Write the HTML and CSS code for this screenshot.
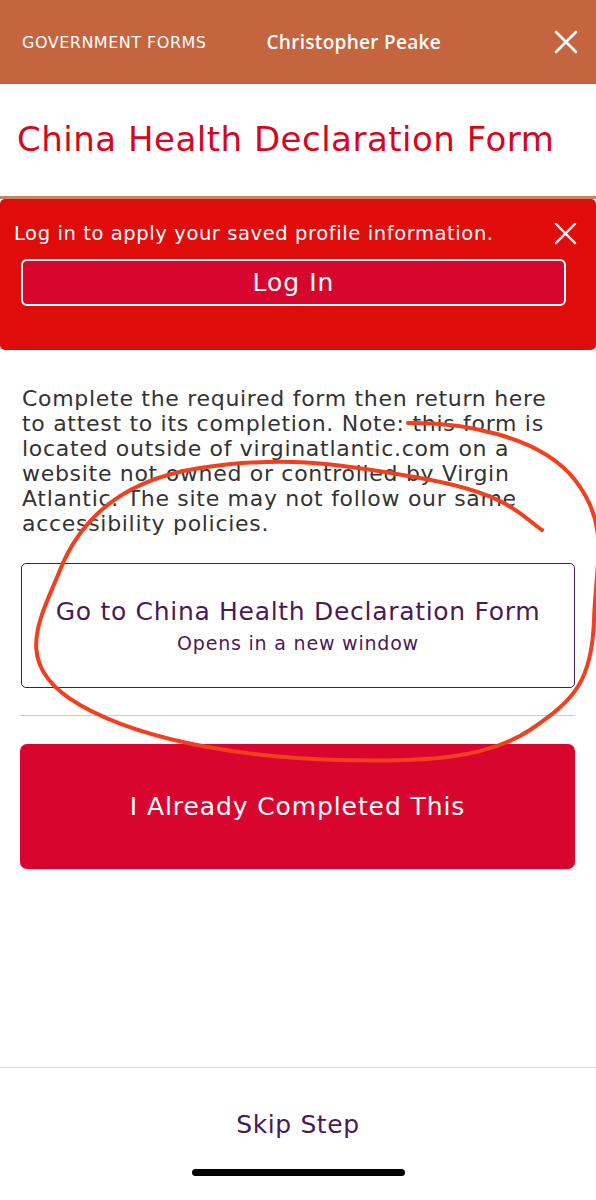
FILE: index.html
```html
<html>
  <head>
    <meta http-equiv="content-type" content="text/html; charset=UTF-8">
    <title>China Health Declaration Form</title>
    <link rel="stylesheet" href="styles.css">
  </head>
  <body>
    <div class="screen">
      <div class="topbar">
        <span class="topbar_label">GOVERNMENT FORMS</span>
        <span class="topbar_name">Christopher Peake</span>
        <svg class="close" width="24" height="24" viewBox="0 0 24 24"><path d="M2 2 L22 22 M22 2 L2 22" stroke="#fff" stroke-width="2.6" stroke-linecap="round"/></svg>
      </div>

      <div class="title_box">
        <h1 class="head_title">China Health Declaration Form</h1>
      </div>

      <div class="banner">
        <div class="banner_row">
          <span class="banner_text">Log in to apply your saved profile information.</span>
          <svg class="close" width="23" height="23" viewBox="0 0 24 24"><path d="M2 2 L22 22 M22 2 L2 22" stroke="#fff" stroke-width="2.4" stroke-linecap="round"/></svg>
        </div>
        <button class="btn_login">Log In</button>
      </div>

      <p class="note">Complete the required form then return here to attest to its completion. Note: this form is located outside of virginatlantic.com on a website not owned or controlled by Virgin Atlantic. The site may not follow our same accessibility policies.</p>

      <a class="btn_goto" href="#">
        <span class="goto_main">Go to China Health Declaration Form</span>
        <span class="goto_sub">Opens in a new window</span>
      </a>

      <hr class="divider">

      <button class="btn_done">I Already Completed This</button>

      <div class="footer">
        <a class="skip" href="#">Skip Step</a>
        <div class="home_bar"></div>
      </div>

      <!-- hand drawn circle on top of the screenshot -->
      <svg class="scribble" width="596" height="1200" viewBox="0 0 596 1200">
        <path d="M408,423 C460,422 540,435 575,480 S596,560 594,620 S575,700 530,730 S420,762 340,760 S150,745 80,705 S40,620 60,570 S120,480 200,468 S330,462 420,478 S520,515 542,530" fill="none" stroke="#f0401e" stroke-width="4" stroke-linecap="round"/>
      </svg>
    </div>
  </body>
</html>
```

FILE: styles.css
```css
body { margin:0; font-family:"DejaVu Sans", "Open Sans", Arial, sans-serif; background:#fff; }
.screen { position:relative; width:596px; height:1200px; display:flex; flex-direction:column; overflow:hidden; }

.topbar { height:84px; background:#c4653f; display:flex; align-items:center; color:#fff; flex-shrink:0; }
.topbar_label { margin-left:22px; font-size:16px; letter-spacing:0.5px; }
.topbar_name { margin-left:60px; font-family:"Open Sans", "DejaVu Sans", sans-serif; font-size:19px; font-weight:600; letter-spacing:0.3px; }
.topbar .close { margin-left:auto; margin-right:18px; }

.title_box { height:115px; border-bottom:3px solid #c9855b; display:flex; align-items:center; padding:0 17px 3px 17px; flex-shrink:0; box-sizing:border-box; }
.head_title { margin:0; font-size:34px; font-weight:normal; letter-spacing:0.5px; color:#d3081f; }

.banner { background:#e00b0b; border-radius:5px; height:151px; box-sizing:border-box; padding:20px 0 0 0; flex-shrink:0; }
.banner_row { display:flex; align-items:center; height:28px; }
.banner_text { margin-left:14px; font-size:19.5px; letter-spacing:0.6px; color:#fff; }
.banner .close { margin-left:auto; margin-right:19px; }
.btn_login { display:block; margin:12px 30px 0 21px; width:545px; height:47px; background:#d8062f; border:2px solid #fff; border-radius:6px; color:#fff; font-family:inherit; font-size:25px; letter-spacing:1px; }

.note { margin:36px 45px 0 22px; font-size:22px; line-height:25px; letter-spacing:0.7px; color:#333; }

.btn_goto { display:flex; flex-direction:column; align-items:center; justify-content:center; margin:27px 21px 0 21px; height:125px; box-sizing:border-box; border:1.5px solid #4b1a55; border-radius:5px; text-decoration:none; color:#4b1a55; }
.goto_main { font-size:25px; letter-spacing:0.7px; }
.goto_sub { font-size:19px; letter-spacing:0.8px; margin-top:6px; }

.divider { margin:27px 21px 0 20px; border:0; border-top:1.5px solid #c9c9d9; }

.btn_done { display:block; margin:28px 21px 0 20px; height:125px; background:#d8062f; border:0; border-radius:7px; color:#fff; font-family:inherit; font-size:25px; letter-spacing:0.9px; }

.footer { margin-top:auto; height:132px; border-top:1.5px solid #dcdcdc; display:flex; flex-direction:column; align-items:center; }
.skip { margin-top:42px; font-size:25px; letter-spacing:0.6px; color:#4b1a55; text-decoration:none; }
.home_bar { margin-top:30px; width:213px; height:7px; border-radius:4px; background:#000; }

.scribble { position:absolute; left:0; top:0; pointer-events:none; }
```
